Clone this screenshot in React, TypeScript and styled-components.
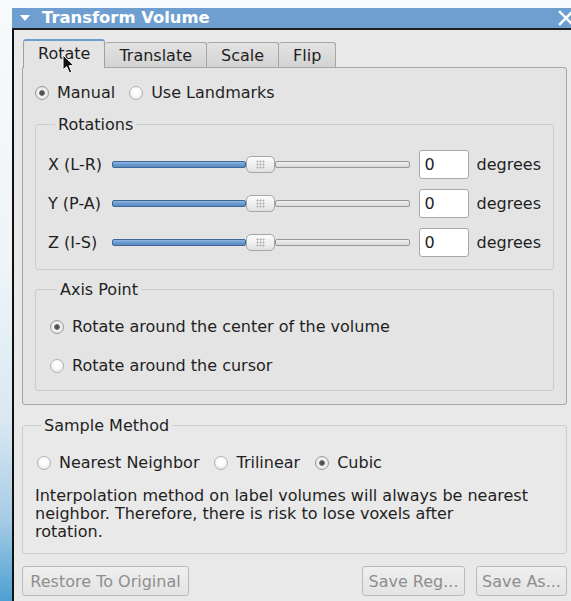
import React from "react";
import styled, { createGlobalStyle } from "styled-components";

const GlobalStyle = createGlobalStyle`
  html, body {
    margin: 0;
    padding: 0;
  }
  body {
    width: 571px;
    height: 601px;
    overflow: hidden;
    font-family: "DejaVu Sans", "Noto Sans", sans-serif;
    font-size: 16px;
    color: #1f1f1f;
  }
  * { box-sizing: border-box; }
`;

const Desktop = styled.div`
  height: 601px;
  padding: 8px 0 0 12px;
  display: flex;
  flex-direction: column;
  background: linear-gradient(
    180deg,
    #f8fafc 0%,
    #eef4f8 45%,
    #d9e8f2 70%,
    #a9cde6 86%,
    #4d9fd2 100%
  );
`;

const Window = styled.div`
  flex: 1;
  display: flex;
  flex-direction: column;
  min-width: 0;
  overflow: hidden;
`;

const TitleBar = styled.div`
  height: 22px;
  flex: none;
  display: flex;
  align-items: center;
  padding-left: 8px;
  background: #6f9fd1;
  border-bottom: 2px solid #1e1e1e;
  color: #ffffff;
  font-weight: bold;
  font-size: 16.4px;
  line-height: 20px;
`;

const Collapse = styled.span`
  width: 0;
  height: 0;
  border-left: 5px solid transparent;
  border-right: 5px solid transparent;
  border-top: 6px solid #ffffff;
  margin-right: 12px;
`;

const CloseGlyph = styled.svg`
  margin-left: auto;
  margin-right: -3px;
  flex: none;
`;

const Body = styled.div`
  flex: 1;
  display: flex;
  flex-direction: column;
  background: #e9e9e9;
  border-left: 2px solid #111111;
  padding: 9px 4px 0 8px;
`;

const TabBar = styled.div`
  position: relative;
  display: flex;
  align-items: flex-end;
  height: 28px;
  margin-left: 1px;
`;

const Tab = styled.div<{ $active?: boolean }>`
  display: flex;
  align-items: center;
  justify-content: center;
  padding: 0 14px;
  line-height: 19px;
  border-top-left-radius: 3px;
  border-top-right-radius: 3px;
  ${(p) =>
    p.$active
      ? `
    height: 29px;
    margin-bottom: -1px;
    padding-bottom: 2px;
    background: #e4e4e4;
    border: 1px solid #a0a0a0;
    border-top: 2px solid #6c9ed2;
    border-bottom: none;
    z-index: 1;
  `
      : `
    height: 25px;
    padding-top: 1px;
    background: linear-gradient(180deg, #e3e3e3 0%, #d3d3d3 100%);
    border-top: 1px solid #a6a6a6;
    border-right: 1px solid #a6a6a6;
  `}
`;

const Pointer = styled.svg`
  position: absolute;
  left: 39px;
  top: 15px;
  z-index: 2;
  pointer-events: none;
`;

const Pane = styled.div`
  border: 1px solid #a6a6a6;
  border-radius: 0 3px 3px 3px;
  background: #e4e4e4;
  padding: 15px 12px 13px 12px;
  display: flex;
  flex-direction: column;
`;

const RadioRow = styled.div<{ $gap?: number }>`
  display: flex;
  align-items: center;
  gap: ${(p) => p.$gap ?? 14}px;
  line-height: 19px;
`;

const RadioColumn = styled.div`
  display: flex;
  flex-direction: column;
  gap: 20px;
  line-height: 19px;
`;

const RadioOption = styled.label`
  display: flex;
  align-items: center;
  gap: 8px;
  white-space: nowrap;
`;

const RadioDot = styled.span<{ $checked?: boolean }>`
  width: 14px;
  height: 14px;
  flex: none;
  border-radius: 50%;
  border: 1px solid ${(p) => (p.$checked ? "#9a9a9a" : "#b4b4b4")};
  background: ${(p) =>
    p.$checked
      ? "radial-gradient(circle at 50% 50%, #4a4a4a 0px, #5c5c5c 2.4px, #f4f4f4 3.2px, #e2e2e2 7px)"
      : "radial-gradient(circle at 50% 40%, #ffffff 0px, #fbfbfb 4px, #e8e8e8 7px)"};
`;

const Group = styled.fieldset<{ $mt?: number; $pad?: string }>`
  margin: ${(p) => p.$mt ?? 0}px 0 0 0;
  border: 1px solid #cccccc;
  border-radius: 3px;
  padding: ${(p) => p.$pad ?? "16px 12px 12px 12px"};
  min-width: 0;
`;

const Legend = styled.legend<{ $ml?: number }>`
  padding: 0 3px;
  margin-left: ${(p) => p.$ml ?? 7}px;
  line-height: 19px;
`;

const SliderGrid = styled.div`
  display: grid;
  grid-template-columns: 56px 1fr 50px auto;
  column-gap: 8px;
  row-gap: 10px;
  align-items: center;
`;

const AxisLabel = styled.span`
  white-space: nowrap;
`;

const Slider = styled.div`
  display: flex;
  align-items: center;
  height: 29px;
  margin-right: 1px;
`;

const Groove = styled.div<{ $filled?: boolean }>`
  height: 7px;
  border-radius: 2px;
  ${(p) =>
    p.$filled
      ? `
    background: linear-gradient(180deg, #8fb7e2 0%, #6797cc 55%, #5a8bc2 100%);
    border: 1px solid #3f6794;
  `
      : `
    background: linear-gradient(180deg, #eeeeee 0%, #dadada 100%);
    border: 1px solid #979797;
  `}
`;

const Handle = styled.div`
  width: 29px;
  height: 17px;
  flex: none;
  border-radius: 5px;
  border: 1px solid #a5a5a5;
  background: linear-gradient(180deg, #fcfcfc 0%, #eeeeee 60%, #e0e0e0 100%);
  display: flex;
  align-items: center;
  justify-content: center;
`;

const Grip = styled.span`
  width: 9px;
  height: 9px;
  background-image: radial-gradient(circle, #b5b5b5 0.9px, transparent 1.2px);
  background-size: 3px 3px;
`;

const NumberBox = styled.input`
  width: 50px;
  height: 29px;
  border: 1px solid #a8a8a8;
  border-radius: 3px;
  background: #ffffff;
  padding: 0 5px;
  font-family: "DejaVu Sans", "Noto Sans", sans-serif;
  font-size: 16px;
  color: #1f1f1f;
  outline: none;
`;

const Unit = styled.span`
  white-space: nowrap;
`;

const Note = styled.p`
  margin: 15px 0 0 0;
  line-height: 18px;
  white-space: pre-line;
`;

const ButtonRow = styled.div`
  display: flex;
  align-items: center;
  gap: 11px;
  margin-top: 12px;
`;

const Spacer = styled.div`
  flex: 1;
`;

const Button = styled.button<{ $w: number }>`
  width: ${(p) => p.$w}px;
  height: 30px;
  padding: 0;
  border: 1px solid #bababa;
  border-radius: 3px;
  background: linear-gradient(180deg, #efefef 0%, #e4e4e4 100%);
  font-family: "DejaVu Sans", "Noto Sans", sans-serif;
  font-size: 16px;
  color: #8e8e8e;
  white-space: nowrap;
`;

const axes = [
  { label: "X (L-R)", value: 0 },
  { label: "Y (P-A)", value: 0 },
  { label: "Z (I-S)", value: 0 },
];

function AngleSlider({ value }: { value: number }) {
  const frac = (value + 180) / 360;
  return (
    <Slider>
      <Groove $filled style={{ flex: frac }} />
      <Handle>
        <Grip />
      </Handle>
      <Groove style={{ flex: 1 - frac }} />
    </Slider>
  );
}

function Radio({ checked, children }: { checked?: boolean; children: React.ReactNode }) {
  return (
    <RadioOption>
      <RadioDot $checked={checked} />
      {children}
    </RadioOption>
  );
}

export default function App() {
  return (
    <>
      <GlobalStyle />
      <Desktop>
        <Window>
          <TitleBar>
            <Collapse />
            Transform Volume
            <CloseGlyph width="16" height="16" viewBox="0 0 16 16">
              <path d="M2 2 L14 14 M14 2 L2 14" stroke="#ffffff" strokeWidth="2.4" strokeLinecap="square" />
            </CloseGlyph>
          </TitleBar>
          <Body>
            <TabBar>
              <Tab $active>Rotate</Tab>
              <Tab>Translate</Tab>
              <Tab>Scale</Tab>
              <Tab>Flip</Tab>
              <Pointer width="14" height="21" viewBox="0 0 14 21">
                <path
                  d="M1 1 L1 16 L4.6 12.6 L7.4 19 L9.8 18 L7.1 11.7 L12 11.7 Z"
                  fill="#111111"
                  stroke="#ffffff"
                  strokeWidth="1"
                  strokeLinejoin="round"
                />
              </Pointer>
            </TabBar>
            <Pane>
              <RadioRow>
                <Radio checked>Manual</Radio>
                <Radio>Use Landmarks</Radio>
              </RadioRow>

              <Group $mt={13}>
                <Legend>Rotations</Legend>
                <SliderGrid>
                  {axes.map((a) => (
                    <React.Fragment key={a.label}>
                      <AxisLabel>{a.label}</AxisLabel>
                      <AngleSlider value={a.value} />
                      <NumberBox readOnly value={String(a.value)} />
                      <Unit>degrees</Unit>
                    </React.Fragment>
                  ))}
                </SliderGrid>
              </Group>

              <Group $mt={10} $pad="18px 14px 15px 14px">
                <Legend>Axis Point</Legend>
                <RadioColumn>
                  <Radio checked>Rotate around the center of the volume</Radio>
                  <Radio>Rotate around the cursor</Radio>
                </RadioColumn>
              </Group>
            </Pane>

            <Group $mt={11} $pad="18px 12px 12px 12px">
              <Legend $ml={6}>Sample Method</Legend>
              <RadioRow $gap={15} style={{ paddingLeft: 2 }}>
                <Radio>Nearest Neighbor</Radio>
                <Radio>Trilinear</Radio>
                <Radio checked>Cubic</Radio>
              </RadioRow>
              <Note>
                {"Interpolation method on label volumes will always be nearest\nneighbor. Therefore, there is risk to lose voxels after\nrotation."}
              </Note>
            </Group>

            <ButtonRow>
              <Button disabled $w={167}>Restore To Original</Button>
              <Spacer />
              <Button disabled $w={103}>Save Reg...</Button>
              <Button disabled $w={91}>Save As...</Button>
            </ButtonRow>
          </Body>
        </Window>
      </Desktop>
    </>
  );
}
